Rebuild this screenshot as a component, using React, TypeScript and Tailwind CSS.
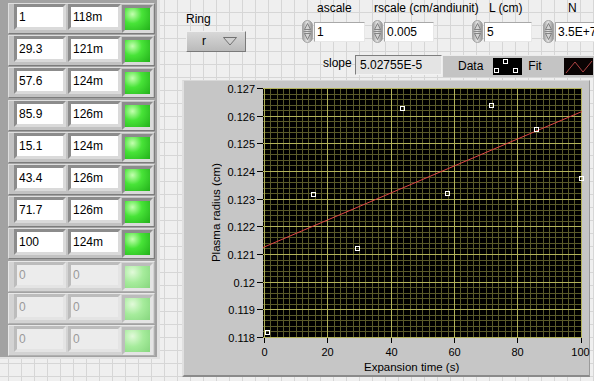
import React from 'react'

const rows = [
  ['1', '118m'],
  ['29.3', '121m'],
  ['57.6', '124m'],
  ['85.9', '126m'],
  ['15.1', '124m'],
  ['43.4', '126m'],
  ['71.7', '126m'],
  ['100', '124m'],
  ['0', '0'],
  ['0', '0'],
  ['0', '0'],
]

// plot mapping (svg coords)
const X0 = 40.5
const XS = 3.165
const Y0 = 7.5
const YS = 27.667
const px = (v: number) => X0 + v * XS
const crisp = (v: number) => Math.floor(v) + 0.5

const points: [number, number][] = [
  [43, 251.5],
  [89, 113],
  [133, 167],
  [178, 27],
  [223, 112],
  [267.3, 24.3],
  [312.3, 48.3],
  [357, 97],
]

const yLabels = ['0.127', '0.126', '0.125', '0.124', '0.123', '0.122', '0.121', '0.12', '0.119', '0.118']
const xLabels = [0, 20, 40, 60, 80, 100]

function ClusterRow({ a, b, off }: { a: string; b: string; off: boolean }) {
  const box = off
    ? 'border-[3px] border-t-[#bcbcbc] border-l-[#bcbcbc] border-b-[#e4e4e4] border-r-[#e4e4e4]'
    : 'border-[3px] border-t-[#8c8c8c] border-l-[#8c8c8c] border-b-[#dadada] border-r-[#dadada]'
  const field = off ? 'bg-[#ececec] text-[#9a9a9a]' : 'bg-white text-black'
  return (
    <div
      className={`flex h-[31px] w-[147px] shrink-0 items-start border pl-[5px] ${
        off
          ? 'border-t-[#e8e8e8] border-l-[#e8e8e8] border-b-[#b0b0b0] border-r-[#b0b0b0] bg-[#d3d3d3]'
          : 'border-t-[#dedede] border-l-[#dedede] border-b-[#7c7c7c] border-r-[#7c7c7c] bg-[#c2c2c2]'
      }`}
    >
      <div className={`${box} h-[26px] w-[52px] shrink-0`}>
        <div className={`${field} h-full pl-[2px] text-[12px] leading-[20px]`}>{a}</div>
      </div>
      <div className={`${box} ml-[2px] h-[26px] w-[53px] shrink-0`}>
        <div className={`${field} h-full pl-[2px] text-[12px] leading-[20px]`}>{b}</div>
      </div>
      <div className={`${box} ml-[1px] mt-[1px] h-[28px] w-[31px] shrink-0`}>
        <div
          className={`h-full w-full ${
            off
              ? 'bg-[radial-gradient(circle_at_30%_28%,#e2fada_0%,#a6ec9c_45%,#86d67e_100%)]'
              : 'bg-[radial-gradient(circle_at_30%_28%,#c4ffb0_0%,#48e438_40%,#22b01a_100%)]'
          }`}
        />
      </div>
    </div>
  )
}

function ArrayPanel() {
  return (
    <div className="flex h-[359px] w-[160px] shrink-0 flex-col gap-[1.2px] border-b-2 border-r-[3px] border-b-[#e2e2e2] border-r-[#e2e2e2] bg-[#a2a2a2] pl-[8px] pt-[3px]">
      {rows.map(([a, b], i) => (
        <ClusterRow key={i} a={a} b={b} off={i > 7} />
      ))}
    </div>
  )
}

function Spinner() {
  return (
    <svg width="11" height="23" viewBox="0 0 11 23" className="shrink-0">
      <defs>
        <linearGradient id="spin" x1="0" x2="1" y1="0" y2="0">
          <stop offset="0" stopColor="#9c9c9c" />
          <stop offset="0.45" stopColor="#e4e4e4" />
          <stop offset="1" stopColor="#8e8e8e" />
        </linearGradient>
      </defs>
      <rect x="0.5" y="0.5" width="10" height="22" rx="5" fill="url(#spin)" stroke="#a4a4a4" />
      <path d="M5.5 3.5 L8.5 9.5 L2.5 9.5 Z" fill="#d2d2d2" stroke="#6e6e6e" strokeWidth="0.8" />
      <path d="M5.5 19.5 L8.5 13.5 L2.5 13.5 Z" fill="#d2d2d2" stroke="#6e6e6e" strokeWidth="0.8" />
      <line x1="1.5" y1="11.5" x2="9.5" y2="11.5" stroke="#8a8a8a" />
    </svg>
  )
}

function Numeric({
  label,
  value,
  className,
  labelPad,
  boxW,
}: {
  label: string
  value: string
  className: string
  labelPad: string
  boxW: string
}) {
  return (
    <div className={`flex shrink-0 flex-col pt-[1px] ${className}`}>
      <div className={`h-[15px] whitespace-nowrap text-[12px] leading-[15px] ${labelPad}`}>{label}</div>
      <div className="mt-[4px] flex items-center">
        <Spinner />
        <div
          className={`ml-[1px] h-[20px] ${boxW} shrink-0 overflow-hidden whitespace-nowrap border border-t-[#a8a8a8] border-l-[#a8a8a8] border-b-[#e8e8e8] border-r-[#e8e8e8] bg-white pl-[2px] text-[12px] leading-[18px]`}
        >
          {value}
        </div>
      </div>
    </div>
  )
}

function TopRow() {
  return (
    <div className="flex h-[55px] items-start">
      <div className="ml-[26px] mt-[12px] flex w-[60px] shrink-0 flex-col">
        <div className="text-[12px] leading-[15px]">Ring</div>
        <div className="mt-[4px] flex h-[21px] items-center border border-t-[#f0f0f0] border-l-[#f0f0f0] border-b-[#7a7a7a] border-r-[#7a7a7a] bg-[linear-gradient(to_bottom,#d8d8d8,#bababa)] pl-[15px]">
          <span className="text-[12px] leading-[15px]">r</span>
          <svg width="14" height="9" viewBox="0 0 14 9" className="ml-[17px]">
            <polygon points="0.5,0.5 13.5,0.5 7,8" fill="#cfcfcf" stroke="#666666" strokeWidth="0.9" />
          </svg>
        </div>
      </div>
      <Numeric label="ascale" value="1" className="ml-[56px]" labelPad="pl-[15px]" boxW="w-[51px]" />
      <Numeric label="rscale (cm/andiunit)" value="0.005" className="ml-[7px] w-[62px]" labelPad="pl-[2px]" boxW="w-[50px]" />
      <Numeric label="L (cm)" value="5" className="ml-[38px]" labelPad="pl-[17px]" boxW="w-[48px]" />
      <Numeric label="N" value="3.5E+7" className="ml-[11px]" labelPad="pl-[25px]" boxW="w-[42px]" />
    </div>
  )
}

function Legend() {
  return (
    <div className="flex h-[22px] w-[152px] shrink-0 items-center border-l border-t border-l-[#ececec] border-t-[#ececec] bg-[#c4c4c4] pl-[15px] text-[12px] leading-[15px]">
      <span>Data</span>
      <svg width="29" height="17" viewBox="0 0 29 17" className="ml-[10px] shrink-0">
        <rect x="0" y="0" width="29" height="17" fill="#000" />
        <rect x="10.5" y="1.5" width="4" height="4" fill="none" stroke="#fff" />
        <rect x="1.5" y="10.5" width="4" height="4" fill="none" stroke="#fff" />
        <rect x="20.5" y="10.5" width="4" height="4" fill="none" stroke="#fff" />
      </svg>
      <span className="ml-[6px]">Fit</span>
      <svg width="29" height="17" viewBox="0 0 29 17" className="ml-[22px] shrink-0">
        <rect x="0" y="0" width="29" height="17" fill="#0a0404" />
        <polyline points="2,15 11,4 19,14 28,3" fill="none" stroke="#b04444" strokeWidth="1" />
      </svg>
    </div>
  )
}

function SecondRow() {
  return (
    <div className="flex h-[25px] items-start">
      <div className="ml-[163px] mt-[1px] w-[32px] shrink-0 text-[12px] leading-[15px]">slope</div>
      <div className="h-[20px] w-[87px] shrink-0 border border-t-[#7e7e7e] border-l-[#7e7e7e] border-b-[#f2f2f2] border-r-[#f2f2f2] bg-[#e4e4e4] pl-[4px] text-[12px] leading-[18px]">
        5.02755E-5
      </div>
      <Legend />
    </div>
  )
}

function Chart() {
  const minorX = Array.from({ length: 51 }, (_, i) => crisp(px(i * 2)))
  const majorX = xLabels.map((v) => crisp(px(v)))
  const minorY = Array.from({ length: 46 }, (_, i) => crisp(Y0 + (i * YS) / 5))
  const majorY = yLabels.map((_, i) => crisp(Y0 + i * YS))
  return (
    <svg
      width="365"
      height="279"
      viewBox="0 0 365 279"
      overflow="visible"
      className="shrink-0 overflow-visible"
      fontFamily="Liberation Sans, Arial, sans-serif"
      fontSize="11"
    >
      <rect x="39" y="7" width="319" height="250" fill="#000" />
      {minorX.map((x, i) => (
        <line key={'mx' + i} x1={x} x2={x} y1="7" y2="257" stroke="#5a5a2a" />
      ))}
      {minorY.map((y, i) => (
        <line key={'my' + i} x1="39" x2="358" y1={y} y2={y} stroke="#5a5a2a" />
      ))}
      {majorX.map((x, i) => (
        <line key={'Mx' + i} x1={x} x2={x} y1="7" y2="257" stroke="#b2b25a" />
      ))}
      {majorY.map((y, i) => (
        <line key={'My' + i} x1="39" x2="358" y1={y} y2={y} stroke="#b2b25a" />
      ))}
      <line x1="39" y1="166.5" x2="358" y2="30.5" stroke="#e04646" strokeWidth="1" />
      {points.map(([x, y], i) => (
        <rect key={'p' + i} x={Math.floor(x) - 2 + 0.5} y={Math.floor(y) - 2 + 0.5} width="4" height="4" fill="none" stroke="#fff" />
      ))}
      {majorY.map((y, i) => (
        <g key={'yl' + i}>
          <line x1="33" x2="39" y1={y} y2={y} stroke="#000" />
          <text x="31" y={y + 4.5} textAnchor="end" fill="#000">
            {yLabels[i]}
          </text>
        </g>
      ))}
      {majorX.map((x, i) => (
        <g key={'xl' + i}>
          <line x1={x} x2={x} y1="257" y2="262" stroke="#000" />
          <text x={i === 5 ? x - 1 : x} y="275" textAnchor="middle" fill="#000">
            {xLabels[i]}
          </text>
        </g>
      ))}
    </svg>
  )
}

function GraphPanel() {
  return (
    <div className="ml-[22px] flex h-[297px] w-[408px] shrink-0 flex-col border-b-2 border-l-2 border-r border-t border-b-[#8a8a8a] border-l-[#e0e0e0] border-r-[#9a9a9a] border-t-[#d8d8d8] bg-[#c6c6c6]">
      <div className="flex h-[279px]">
        <div className="flex w-[40px] shrink-0 items-center justify-end pb-[16px] pr-[1px]">
          <div className="rotate-180 whitespace-nowrap text-[11.5px] leading-[14px] [writing-mode:vertical-rl]">
            Plasma radius (cm)
          </div>
        </div>
        <Chart />
      </div>
      <div className="h-[15px] whitespace-nowrap pl-[180px] text-[11.5px] leading-[15px]">Expansion time (s)</div>
    </div>
  )
}

export default function App() {
  return (
    <div className="relative h-[381px] w-[594px] overflow-hidden bg-[#efefef] bg-[linear-gradient(to_right,#d6d6d6_1px,transparent_1px),linear-gradient(to_bottom,#d6d6d6_1px,transparent_1px)] bg-[size:13px_13px] bg-[position:8px_12px] font-['Liberation_Sans',Arial,sans-serif] text-black">
      <div className="flex">
        <ArrayPanel />
        <div className="flex min-w-0 flex-1 flex-col">
          <TopRow />
          <SecondRow />
          <GraphPanel />
        </div>
      </div>
    </div>
  )
}
